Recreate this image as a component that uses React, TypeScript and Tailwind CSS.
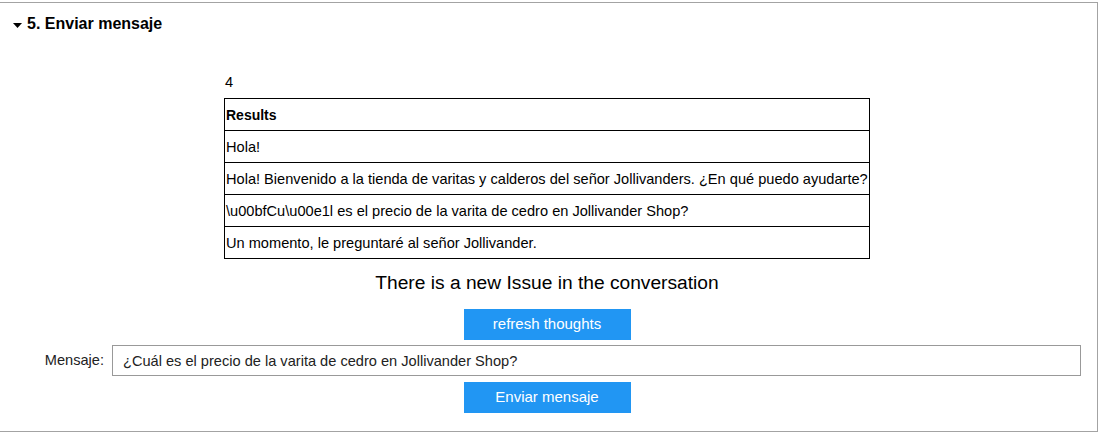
const rows = [
  "Hola!",
  "Hola! Bienvenido a la tienda de varitas y calderos del señor Jollivanders. ¿En qué puedo ayudarte?",
  "\\u00bfCu\\u00e1l es el precio de la varita de cedro en Jollivander Shop?",
  "Un momento, le preguntaré al señor Jollivander.",
];

export default function App() {
  return (
    <div className="pt-[2px] font-['Liberation_Sans',Arial,sans-serif] text-black bg-white">
      <div className="ml-[-4px] w-[1102px] h-[430px] border border-[#a3a3a3] flex flex-col">
        {/* section header */}
        <div className="mt-[12px] pl-[16px] flex items-center h-[18px]">
          <svg width="9" height="5" viewBox="0 0 9 5" className="mt-[2px]">
            <polygon points="0,0 9,0 4.5,5" fill="#000" />
          </svg>
          <span className="ml-[5px] text-[16px] leading-[18px] font-bold">5. Enviar mensaje</span>
        </div>

        <div className="mt-[41px] mx-auto w-fit">
          <div className="text-[14.6px] leading-[16px] pl-[1px]">4</div>
          <table className="mt-[8px] w-[646px] border-collapse text-[14.6px] leading-[16px]">
            <tbody>
              <tr>
                <td className="border border-black h-[32px] px-[1px] font-bold text-[14px]">Results</td>
              </tr>
              {rows.map((r, i) => (
                <tr key={i}>
                  <td className="border border-black h-[32px] px-[1px] whitespace-nowrap">{r}</td>
                </tr>
              ))}
            </tbody>
          </table>
        </div>

        <div className="mt-[12px] text-center text-[19.2px] leading-[23px]">
          There is a new Issue in the conversation
        </div>

        <button className="mt-[15px] mx-auto w-[167px] h-[31px] bg-[#2196F3] text-white text-[15px]">
          refresh thoughts
        </button>

        <div className="mt-[5px] flex items-center h-[31px]">
          <label className="w-[115px] text-right pr-[8px] text-[14.6px] text-[#222]">Mensaje:</label>
          <input
            className="w-[969px] h-[31px] border border-[#999] px-[10px] text-[14.6px] text-[#222] outline-none"
            defaultValue="¿Cuál es el precio de la varita de cedro en Jollivander Shop?"
          />
        </div>

        <button className="mt-[6px] mx-auto w-[167px] h-[31px] bg-[#2196F3] text-white text-[15px]">
          Enviar mensaje
        </button>
      </div>
    </div>
  );
}
